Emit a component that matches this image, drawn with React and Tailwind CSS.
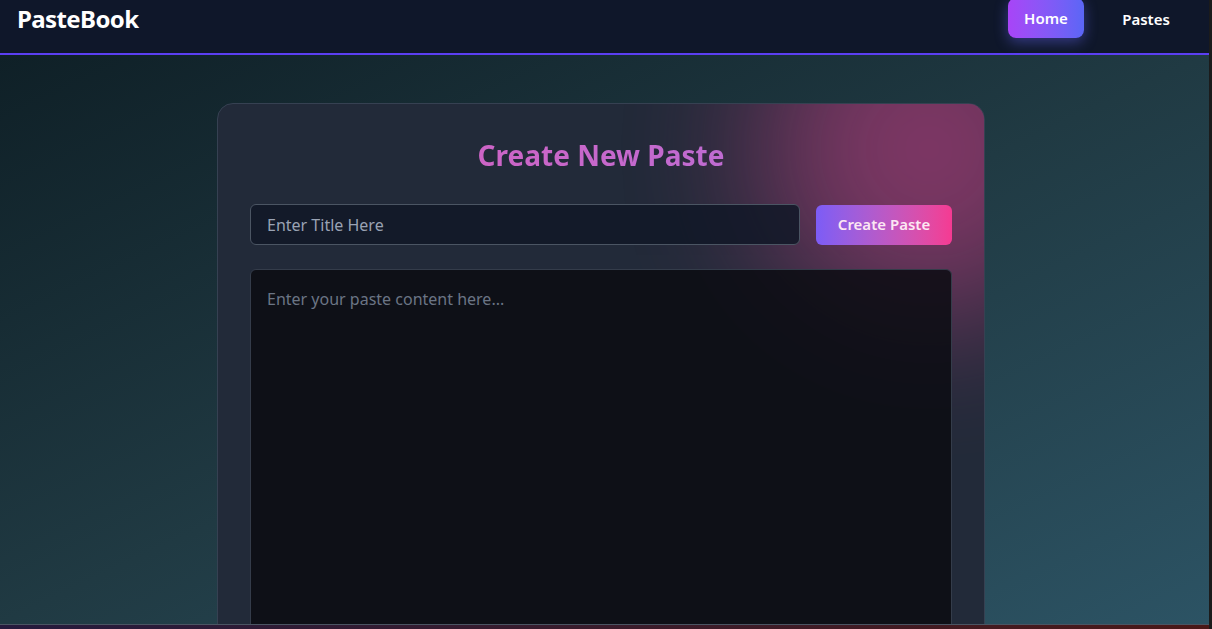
import { useState } from 'react'

function Navbar() {
  return (
    <nav className="h-[55px] shrink-0 bg-[#0f172a] border-b-2 border-[#5b3ff2] flex items-start justify-between pl-[17px] pr-[25px]">
      <div className="h-[38px] flex items-center text-[24px] font-bold text-white tracking-tight">PasteBook</div>
      <div className="flex items-start gap-6">
        <a className="h-[40px] -mt-[2px] w-[76px] flex items-center justify-center rounded-lg bg-gradient-to-r from-[#a844f7] to-[#5a66f6] text-white text-[15px] font-semibold shadow-[0_4px_14px_rgba(99,102,241,0.45)]">
          Home
        </a>
        <a className="h-[38px] w-[76px] flex items-center justify-center text-white text-[15px] font-semibold">
          Pastes
        </a>
      </div>
    </nav>
  )
}

function CreatePaste() {
  const [title, setTitle] = useState('')
  const [content, setContent] = useState('')

  return (
    <div className="relative w-[768px] bg-[#222a39] border border-[#364152] rounded-2xl overflow-hidden">
      {/* pink glow */}
      <div className="pointer-events-none absolute -top-[125px] -right-[115px] w-[340px] h-[340px] rounded-full bg-[#ec4899] opacity-45 blur-[70px]" />

      <div className="relative px-8 pt-[33px] pb-8">
        <h1 className="text-[28px] leading-9 font-bold text-center bg-gradient-to-r from-[#d85cbb] to-[#b371dc] bg-clip-text text-transparent mb-[31px]">
          Create New Paste
        </h1>

        {/* title + button */}
        <div className="flex items-center gap-4 mb-6">
          <input
            value={title}
            onChange={(e) => setTitle(e.target.value)}
            placeholder="Enter Title Here"
            className="flex-1 h-[41px] px-4 rounded-md bg-[#111827]/85 border border-[#4b5563] text-base text-gray-200 placeholder:text-[#9aa3b4] outline-none"
          />
          <button className="w-[136px] h-[40px] rounded-md bg-gradient-to-r from-[#7c5cf6] to-[#f53a92] text-pink-100 text-[15px] font-semibold">
            Create Paste
          </button>
        </div>

        <textarea
          value={content}
          onChange={(e) => setContent(e.target.value)}
          placeholder="Enter your paste content here..."
          className="block w-full h-[420px] px-4 py-[17px] rounded-md bg-[#0a0c12]/85 border border-[#343c4a] text-base text-gray-200 placeholder:text-[#6b7585] outline-none resize-none"
        />
      </div>
    </div>
  )
}

export default function App() {
  return (
    <div className="h-[629px] flex overflow-hidden" style={{ fontFamily: '"Noto Sans", "Open Sans", sans-serif' }}>
      <div className="flex-1 flex flex-col min-w-0">
        <Navbar />
        <main className="flex-1 min-h-0 overflow-hidden bg-gradient-to-br from-[#0f2027] via-[#203a43] to-[#2c5364] flex items-start justify-center pt-12 pr-[7px]">
          <CreatePaste />
        </main>
        <footer className="h-[5px] shrink-0 border-t border-[#4b5563] bg-gradient-to-r from-[#261a3d] via-[#3a1c2c] to-[#4a1818]" />
      </div>
      <div className="w-[3px] bg-[#1b1b1b]" />
    </div>
  )
}
